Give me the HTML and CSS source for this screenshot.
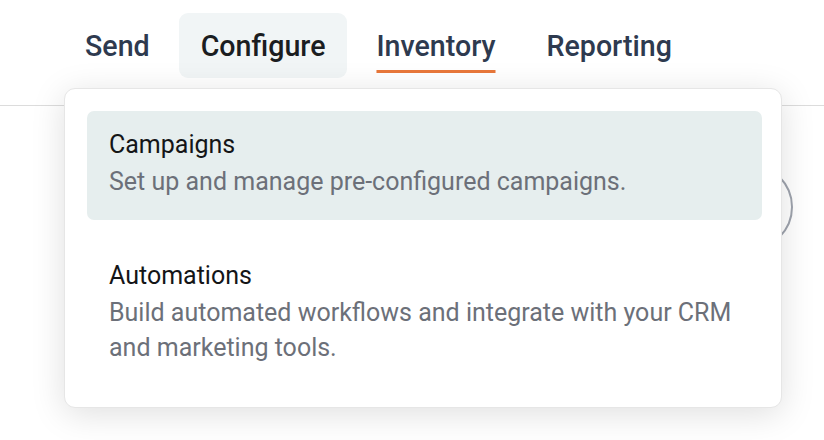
FILE: index.html
```html
<!DOCTYPE html>
<html lang="en">
<head>
<meta charset="utf-8">
<title>Configure</title>
<link rel="stylesheet" href="styles.css">
</head>
<body>
  <header class="topbar">
    <nav class="tabs">
      <a class="tab" href="#">Send</a>
      <a class="tab tab-open" href="#">Configure</a>
      <a class="tab tab-current" href="#"><span class="tab-label">Inventory</span></a>
      <a class="tab" href="#">Reporting</a>
    </nav>
  </header>

  <main class="content">
    <div class="avatar-ring"></div>
  </main>

  <div class="menu">
    <a class="menu-item menu-item-active" href="#">
      <span class="menu-title">Campaigns</span>
      <span class="menu-desc">Set up and manage pre-configured campaigns.</span>
    </a>
    <a class="menu-item" href="#">
      <span class="menu-title">Automations</span>
      <span class="menu-desc">Build automated workflows and integrate with your CRM and marketing tools.</span>
    </a>
  </div>
</body>
</html>
```

FILE: styles.css
```css
* {
  box-sizing: border-box;
}

html, body {
  margin: 0;
  padding: 0;
  background: #ffffff;
  font-family: Roboto, "Noto Sans", "Liberation Sans", sans-serif;
}

body {
  width: 824px;
  height: 440px;
  overflow: hidden;
  position: relative;
}

/* top navigation */
.topbar {
  height: 106px;
  border-bottom: 1px solid #dcdcdc;
  padding: 13px 0 0 63px;
}

.tabs {
  display: flex;
  gap: 7px;
}

.tab {
  display: flex;
  align-items: center;
  height: 65px;
  padding: 0 22px;
  border-radius: 9px;
  font-size: 28.6px;
  font-weight: 500;
  color: #2e3a4f;
  text-decoration: none;
  line-height: 34px;
}

.tab-open {
  background: #f1f5f6;
  color: #1b1d21;
}

.tab-current .tab-label {
  text-decoration: underline;
  text-decoration-color: #e8773a;
  text-decoration-thickness: 3px;
  text-underline-offset: 14px;
  text-decoration-skip-ink: none;
}

/* page body behind the menu */
.content {
  display: flex;
  justify-content: flex-end;
  padding: 58px 31px 0 0;
}

.avatar-ring {
  width: 86px;
  height: 86px;
  border-radius: 50%;
  border: 2.5px solid #9ea3ad;
}

/* dropdown menu */
.menu {
  position: absolute;
  top: 88px;
  left: 64px;
  width: 718px;
  padding: 22px 19px 21px 22px;
  background: #ffffff;
  border: 1px solid #e6e6e6;
  border-radius: 11px;
  box-shadow: 0 6px 34px rgba(0, 0, 0, 0.13);
  display: flex;
  flex-direction: column;
  gap: 22px;
}

.menu-item {
  display: flex;
  flex-direction: column;
  padding: 16px 22px 21px;
  border-radius: 7px;
  text-decoration: none;
}

.menu-item-active {
  background: #e6eeee;
}

.menu-title {
  font-size: 25px;
  line-height: 35px;
  margin-bottom: 2px;
  color: #141517;
}

.menu-desc {
  font-size: 25px;
  line-height: 35px;
  color: #6c7079;
}
```
